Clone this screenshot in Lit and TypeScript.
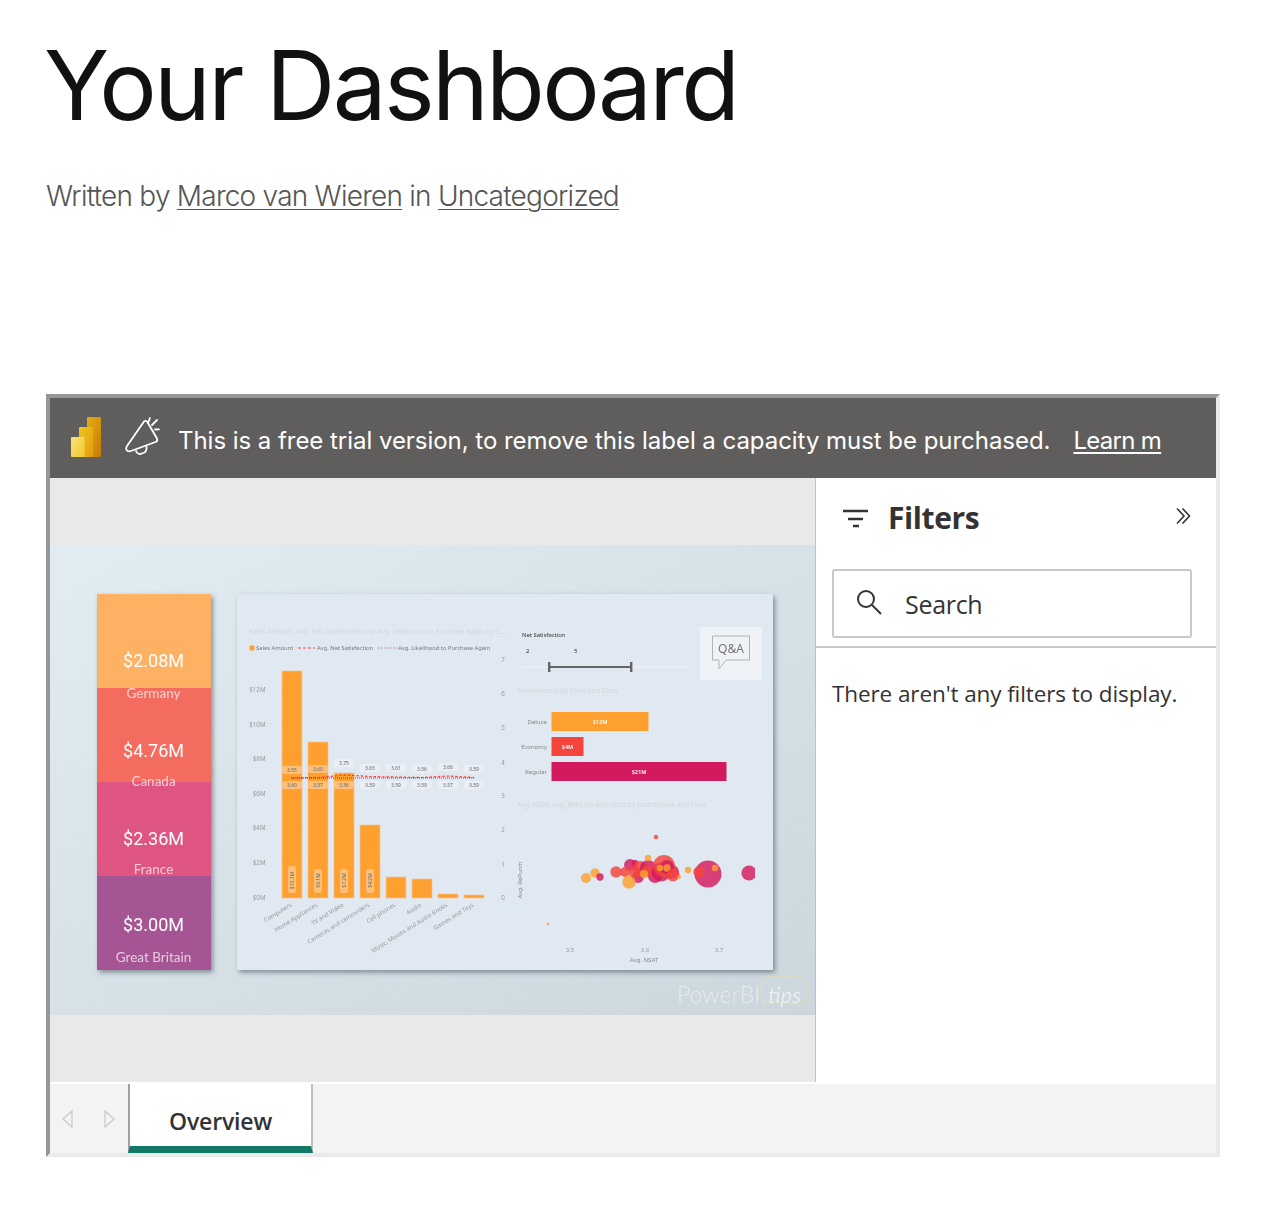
import { html, svg, css, LitElement } from "lit";
import { customElement } from "lit/decorators.js";

const cards = [
    { value: "$2.08M", label: "Germany", top: 594, color: "#fdb164", vy: 667, ly: 698 },
    { value: "$4.76M", label: "Canada", top: 688, color: "#f46c61", vy: 757, ly: 786 },
    { value: "$2.36M", label: "France", top: 782, color: "#df5482", vy: 845, ly: 874 },
    { value: "$3.00M", label: "Great Britain", top: 876, color: "#a55593", vy: 931, ly: 962 },
];

const money = [
    ["$12M", 690], ["$10M", 725], ["$8M", 759], ["$6M", 794], ["$4M", 828], ["$2M", 863], ["$0M", 898],
] as [string, number][];
const rightAxis = [660, 694, 728, 763, 796, 830, 865, 898];

const bars = [
    { x: 282, top: 671, name: "Computers", up: "3.55", upY: 770, low: "3.60", amount: "$13.1M" },
    { x: 308, top: 742, name: "Home Appliances", up: "3.60", upY: 769, low: "3.57", amount: "$9.1M" },
    { x: 334, top: 773, name: "TV and Video", up: "3.75", upY: 763, low: "3.56", amount: "$7.2M" },
    { x: 360, top: 825, name: "Cameras and camcorders", up: "3.63", upY: 768, low: "3.59", amount: "$4.2M" },
    { x: 386, top: 877, name: "Cell phones", up: "3.61", upY: 768, low: "3.59", amount: "" },
    { x: 412, top: 879, name: "Audio", up: "3.56", upY: 769, low: "3.59", amount: "" },
    { x: 438, top: 894, name: "Music, Movies and Audio Books", up: "3.66", upY: 767, low: "3.57", amount: "" },
    { x: 464, top: 895, name: "Games and Toys", up: "3.59", upY: 769, low: "3.59", amount: "" },
];

const classBars = [
    { name: "Deluxe", y: 712, w: 97, color: "#fda02f", label: "$12M" },
    { name: "Economy", y: 737, w: 32, color: "#f4443c", label: "$4M" },
    { name: "Regular", y: 762, w: 175, color: "#d41a5e", label: "$21M" },
];

const O = "#fda02f", R = "#f4443c", P = "#d41a5e";
const bubbles: [number, number, number, string][] = [
    [708, 874, 13.5, P], [656, 837, 2.3, R], [548, 924, 1.3, O], [586, 878, 5, O], [595, 873, 4.7, O],
    [600, 877, 3.7, P], [616, 872, 5.7, R], [630, 865, 6, P], [635, 863, 3.3, P], [638, 877, 6, P],
    [625, 872, 5, R], [640, 868, 7, R], [655, 876, 7, P], [672, 872, 7, P],
    [629, 882, 6.7, O], [635, 872, 6, R], [648, 868, 8, P], [648, 871, 6, R], [648, 858, 3.3, O],
    [644, 874, 4.3, O], [661, 872, 9.5, P], [664, 866, 11, R], [667, 867, 7, P], [660, 868, 3.3, O],
    [667, 868, 3.7, O], [673, 875, 6.5, R], [679, 877, 2, O], [688, 870, 3.2, O], [699, 872, 5.7, R],
    [715, 868, 3.3, O], [749, 873, 7.6, P],
];

@customElement("app-root")
export class AppRoot extends LitElement {
    static styles = css`
        :host {
            display: block;
            height: 1218px;
            padding: 0 42px 0 46px;
            box-sizing: border-box;
            background: #fff;
            font-family: "Inter", "Liberation Sans", sans-serif;
        }

        h1 {
            margin: 0 0 0 -2px;
            padding-top: 29px;
            font-size: 96px;
            line-height: 112px;
            font-weight: 400;
            letter-spacing: -2.65px;
            color: #111;
        }

        .byline {
            margin: 37px 0 0;
            font-size: 28px;
            line-height: 36px;
            font-weight: 300;
            letter-spacing: -0.76px;
            color: #555;
        }

        .byline a {
            color: inherit;
            text-decoration: underline;
            text-decoration-thickness: 1px;
            text-underline-offset: 3px;
        }

        .embed {
            margin-top: 180px;
            height: 763px;
            box-sizing: border-box;
            border: 4px solid;
            border-color: #969696 #eaeaea #eaeaea #969696;
            display: flex;
            flex-direction: column;
        }

        .banner {
            height: 80px;
            flex: none;
            background: #605e5c;
            display: flex;
            align-items: center;
            padding-left: 21px;
            color: #fff;
            font-size: 24px;
            letter-spacing: -0.04px;
            white-space: nowrap;
            overflow: hidden;
        }

        .banner .logo {
            width: 30px;
            height: 40px;
            flex: none;
            margin-top: -2px;
        }

        .banner .horn {
            width: 44px;
            height: 44px;
            flex: none;
            margin: 0 15px 0 18px;
        }

        .banner span {
            margin-top: 4px;
        }

        .banner a {
            margin: 4px 0 0 23px;
            color: #fff;
            letter-spacing: -0.7px;
            text-decoration: underline;
            text-underline-offset: 3px;
            text-decoration-thickness: 2px;
        }

        .main {
            flex: 1;
            display: flex;
            min-height: 0;
        }

        .canvas {
            width: 765px;
            flex: none;
            background: #e9e9e9;
            display: flex;
            align-items: center;
        }

        .canvas svg {
            display: block;
            width: 765px;
            height: 470px;
            filter: blur(0.4px);
        }

        .filters {
            flex: 1;
            border-left: 1px solid #c0c0c0;
            background: #fff;
            color: #333;
            font-family: "Open Sans", "Noto Sans", sans-serif;
        }

        .filters-head {
            height: 80px;
            display: flex;
            align-items: center;
            padding: 0 25px 0 26px;
            box-sizing: border-box;
        }

        .filters-head .funnel {
            width: 28px;
            height: 24px;
            margin-right: 18px;
        }

        .filters-head h2 {
            margin: 0;
            flex: 1;
            font-size: 30px;
            line-height: 40px;
            font-weight: 700;
            letter-spacing: -0.4px;
        }

        .filters-head .collapse {
            width: 16px;
            height: 18px;
            margin-top: -4px;
        }

        .search {
            margin: 11px 24px 0 16px;
            height: 69px;
            box-sizing: border-box;
            border: 2px solid #c8c8c8;
            border-radius: 3px;
            display: flex;
            align-items: center;
            padding-left: 22px;
            font-size: 25px;
            letter-spacing: -0.3px;
        }

        .search svg {
            width: 26px;
            height: 26px;
            margin-right: 23px;
            margin-top: -4px;
        }

        .rule {
            height: 2px;
            background: #c8c8c8;
            margin-top: 8px;
        }

        .empty {
            margin: 30px 0 0 16px;
            font-size: 22.5px;
            line-height: 32px;
            letter-spacing: -0.1px;
        }

        .tabs {
            height: 71px;
            flex: none;
            box-sizing: border-box;
            border-top: 2px solid #fff;
            background: #f3f3f3;
            display: flex;
        }

        .arrows {
            width: 78px;
            flex: none;
            display: flex;
            align-items: center;
            justify-content: space-between;
            padding: 0 13px 0 12px;
            box-sizing: border-box;
        }

        .arrows svg {
            width: 11px;
            height: 18px;
        }

        .tab {
            width: 185px;
            box-sizing: border-box;
            border-left: 2px solid #a0a0a0;
            border-right: 2px solid #c0c0c0;
            border-bottom: 7px solid #117865;
            padding-top: 11px;
            background: #fff;
            display: flex;
            align-items: center;
            justify-content: center;
            font-family: "Open Sans", "Noto Sans", sans-serif;
            font-size: 23px;
            font-weight: 600;
            letter-spacing: -0.15px;
            color: #333;
        }
    `;

    renderCards() {
        return cards.map((c) => svg`
            <rect x="97" y=${c.top} width="114" height="94" fill=${c.color}></rect>
        `);
    }

    renderCardText() {
        return cards.map((c) => svg`
            <text x="153.5" y=${c.vy} font-size="18" font-family="Roboto, sans-serif" text-anchor="middle" fill="#fff">${c.value}</text>
            <text x="153.5" y=${c.ly} font-size="13.500" font-family="Lato, sans-serif" text-anchor="middle" fill="#fff" fill-opacity="0.7">${c.label}</text>
        `);
    }

    renderCombo() {
        const pts = bars.map((b) => b.x + 10);
        const redY = [778, 777.5, 775, 776.5, 777, 777.5, 776, 777.5];
        const red = pts.map((x, i) => `${x},${redY[i]}`).join(" ");
        const pill = (x: number, y: number, t: string, onBar: boolean) => svg`
            <rect x=${x - 10} y=${y - 4} width="20" height="8" rx="2" fill=${onBar ? "#fdbf7a" : "#eaeff5"}></rect>
            <text x=${x} y=${y + 2} font-size="5" text-anchor="middle" fill="#666">${t}</text>
        `;
        return svg`
            <text x="249" y="634" font-size="6.75" fill="#d2d6db">Sales Amount, Avg. Net Satisfaction and Avg. Likelihood to Purchase Again by C...</text>
            <circle cx="252" cy="648" r="2.7" fill=${O}></circle>
            <text x="256" y="650" font-size="5.8" fill="#777">Sales Amount</text>
            <line x1="298" y1="648" x2="315" y2="648" stroke=${R} stroke-width="1" stroke-dasharray="3 2"></line>
            <text x="317" y="650" font-size="5.8" fill="#777">Avg. Net Satisfaction</text>
            <line x1="378" y1="648" x2="397" y2="648" stroke="#a0609a" stroke-width="0.8" stroke-dasharray="1.5 1.5"></line>
            <text x="398" y="650" font-size="5.8" fill="#777">Avg. Likelihood to Purchase Again</text>
            ${money.map(([t, y]) => svg`
                <line x1="274" y1=${y} x2="494" y2=${y} stroke="#e6ebf1" stroke-width="1"></line>
                <text x="265.5" y=${y + 2} font-size="6.2" text-anchor="end" fill="#999">${t}</text>
            `)}
            ${rightAxis.map((y, i) => svg`
                <text x="503" y=${y + 2} font-size="6.2" text-anchor="middle" fill="#999">${7 - i}</text>
            `)}
            ${bars.map((b) => svg`
                <rect x=${b.x} y=${b.top} width="20" height=${898 - b.top} fill=${O} stroke="#f6c48c" stroke-width="0.7"></rect>
            `)}
            ${bars.map((b) => svg`
                ${pill(b.x + 10, b.upY, b.up, b.top < b.upY)}
                ${pill(b.x + 10, 785, b.low, b.top < 785)}
                ${b.amount ? svg`
                    <rect x=${b.x + 6} y=${b.amount.length > 5 ? 866 : 869} width="8" height=${b.amount.length > 5 ? 27 : 24} rx="2.5" fill="#fdbf7a"></rect>
                    <text transform="translate(${b.x + 12},880.5) rotate(-90)" font-size="5" text-anchor="middle" fill="#666">${b.amount}</text>
                ` : ""}
                <text transform="translate(${b.x + 10},906) rotate(-32)" font-size="6" text-anchor="end" fill="#999">${b.name}</text>
            `)}
            <polyline points=${red} fill="none" stroke=${R} stroke-width="1.2" stroke-dasharray="2.5 1.8"></polyline>
            <line x1="291" y1="778" x2="475" y2="778" stroke="#4a2a80" stroke-width="0.8" stroke-dasharray="1 1"></line>
        `;
    }

    renderSlicer() {
        return svg`
            <text x="522" y="637" font-size="5.9" fill="#333">Net Satisfaction</text>
            <rect x="522" y="643" width="44" height="14" fill="none" stroke="#e6ebf1" stroke-width="0.6"></rect>
            <rect x="570" y="643" width="43" height="14" fill="none" stroke="#e6ebf1" stroke-width="0.6"></rect>
            <text x="526" y="652.5" font-size="6" fill="#333">2</text>
            <text x="574" y="652.5" font-size="6" fill="#333">5</text>
            <line x1="522" y1="667" x2="688" y2="667" stroke="#eef1f4" stroke-width="1.5"></line>
            <line x1="549" y1="667" x2="631" y2="667" stroke="#666" stroke-width="2"></line>
            <rect x="548" y="662" width="2.4" height="10" fill="#666"></rect>
            <rect x="630" y="662" width="2.4" height="10" fill="#666"></rect>
            <rect x="700" y="627" width="62" height="53" fill="#eff3f8"></rect>
            <path d="M712.5 636h37v24h-23l-7.500 8.500v-8.500h-6.500z" fill="none" stroke="#aaa" stroke-width="0.9"></path>
            <text x="731" y="653" font-size="12" text-anchor="middle" fill="#777">Q&amp;A</text>
        `;
    }

    renderClassBars() {
        return svg`
            <text x="517" y="693" font-size="6.75" fill="#d2d6db">SalesAmount by Class and Class</text>
            ${classBars.map((b) => svg`
                <text x="547" y=${b.y + 11.500} font-size="6" text-anchor="end" fill="#888">${b.name}</text>
                <rect x="551.5" y=${b.y} width=${b.w} height="19" fill=${b.color}></rect>
                <text x=${551.5 + b.w / 2} y=${b.y + 11.500} font-size="5.500" font-weight="700" text-anchor="middle" fill="#fff" fill-opacity="0.9">${b.label}</text>
            `)}
        `;
    }

    renderScatter() {
        return svg`
            <text x="517" y="807" font-size="6.75" fill="#d2d6db">Avg. NSAT, Avg. RePurch and Units by BrandName and Class</text>
            ${[["3.5", 570], ["3.6", 645], ["3.7", 719]].map(([t, x]) => svg`
                <line x1=${x} y1="815" x2=${x} y2="942" stroke="#e8edf3" stroke-width="0.8"></line>
                <text x=${x} y="952" font-size="6" text-anchor="middle" fill="#999">${t}</text>
            `)}
            <text x="644" y="962" font-size="6" text-anchor="middle" fill="#888">Avg. NSAT</text>
            <text transform="translate(522,880) rotate(-90)" font-size="6" text-anchor="middle" fill="#888">Avg. RePurch</text>
            <g clip-path="url(#plot)">
                ${bubbles.map(([x, y, r, c]) => svg`<circle cx=${x} cy=${y} r=${r} fill=${c} fill-opacity="0.82"></circle>`)}
            </g>
        `;
    }

    renderReport() {
        return html`
            <svg viewBox="50 545 765 470" font-family="Noto Sans, sans-serif">
                <defs>
                    <linearGradient id="bg" x1="0" y1="0" x2="1" y2="1">
                        <stop offset="0" stop-color="#e2edf3"></stop>
                        <stop offset="1" stop-color="#ccd6dd"></stop>
                    </linearGradient>
                    <filter id="shade" x="-10%" y="-10%" width="120%" height="120%">
                        <feDropShadow dx="2" dy="2.500" stdDeviation="2.500" flood-color="#5c6670" flood-opacity="0.7"></feDropShadow>
                    </filter>
                    <clipPath id="plot"><rect x="530" y="815" width="225" height="130"></rect></clipPath>
                </defs>
                <rect x="50" y="545" width="765" height="470" fill="url(#bg)"></rect>

                <g filter="url(#shade)">${this.renderCards()}</g>
                ${this.renderCardText()}

                <rect x="237" y="594" width="536" height="376" fill="#e0e8f1" filter="url(#shade)"></rect>
                ${this.renderCombo()}
                ${this.renderSlicer()}
                ${this.renderClassBars()}
                ${this.renderScatter()}

                <text x="677" y="1003" font-size="23" fill="#fff" fill-opacity="0.5" font-weight="300" font-family="Lato, sans-serif">PowerBI.</text>
                <rect x="761" y="977" width="46" height="26" rx="5" fill="none" stroke="#e8dca8" stroke-width="1" stroke-opacity="0.8"></rect>
                <text x="768" y="1003" font-size="22" font-style="italic" fill="#fff" fill-opacity="0.55" font-family="Lato, sans-serif">tips</text>
            </svg>
        `;
    }

    render() {
        return html`
            <h1>Your Dashboard</h1>
            <p class="byline">Written by <a href="#">Marco van Wieren</a> in <a href="#">Uncategorized</a></p>

            <div class="embed">
                <div class="banner">
                    <svg class="logo" viewBox="71 417 30 40">
                        <defs>
                            <linearGradient id="pb1" x1="0" y1="0" x2="1" y2="1">
                                <stop offset="0" stop-color="#e6ad10"></stop>
                                <stop offset="1" stop-color="#c87a08"></stop>
                            </linearGradient>
                            <linearGradient id="pb2" x1="0" y1="0" x2="1" y2="1">
                                <stop offset="0" stop-color="#f2c31d"></stop>
                                <stop offset="1" stop-color="#e09f10"></stop>
                            </linearGradient>
                            <linearGradient id="pb3" x1="0" y1="0" x2="1" y2="1">
                                <stop offset="0" stop-color="#f9e27a"></stop>
                                <stop offset="1" stop-color="#f2c82c"></stop>
                            </linearGradient>
                        </defs>
                        <rect x="87" y="417" width="14" height="40" rx="1" fill="url(#pb1)"></rect>
                        <rect x="79" y="427" width="14" height="30" rx="1" fill="url(#pb2)"></rect>
                        <rect x="71" y="437" width="13.500" height="20" rx="1" fill="url(#pb3)"></rect>
                    </svg>
                    <svg class="horn" viewBox="119 416 44 44" fill="none" stroke="#fff" stroke-width="1.800" stroke-linecap="round" stroke-linejoin="round">
                        <path d="M144 421.500Q145.800 420 147.200 421.800L157 438.500Q158 441 155.500 442L131 451Q128 452 126.500 450Q125.500 448 127 446Z"></path>
                        <path d="M136 451C137 454 140 454.500 142 453.500C145.500 452.500 147 450 146.500 447"></path>
                        <path d="M148 423l2-5M152 425l5-5M155 429.500l4-.2"></path>
                    </svg>
                    <span>This is a free trial version, to remove this label a capacity must be purchased.</span>
                    <a href="#">Learn m</a>
                </div>

                <div class="main">
                    <div class="canvas">${this.renderReport()}</div>

                    <aside class="filters">
                        <div class="filters-head">
                            <svg class="funnel" viewBox="0 0 28 24" fill="none" stroke="#333" stroke-width="2.400">
                                <path d="M1 5h25M6 13h15M11 20h6"></path>
                            </svg>
                            <h2>Filters</h2>
                            <svg class="collapse" viewBox="0 0 16 18" fill="none" stroke="#333" stroke-width="1.600">
                                <path d="M2 1.500l7 7.500-7 7.500M7.500 1.500l7 7.500-7 7.500"></path>
                            </svg>
                        </div>
                        <div class="search">
                            <svg viewBox="0 0 26 26" fill="none" stroke="#333" stroke-width="2">
                                <circle cx="10" cy="10" r="8"></circle>
                                <path d="M16 16l9 9"></path>
                            </svg>
                            <span>Search</span>
                        </div>
                        <div class="rule"></div>
                        <p class="empty">There aren't any filters to display.</p>
                    </aside>
                </div>

                <div class="tabs">
                    <div class="arrows">
                        <svg viewBox="0 0 11 18" fill="none" stroke="#c8c8c8" stroke-width="1.200"><path d="M10 1L1 9l9 8z"></path></svg>
                        <svg viewBox="0 0 11 18" fill="none" stroke="#c8c8c8" stroke-width="1.200"><path d="M1 1l9 8-9 8z"></path></svg>
                    </div>
                    <div class="tab">Overview</div>
                </div>
            </div>
        `;
    }
}
